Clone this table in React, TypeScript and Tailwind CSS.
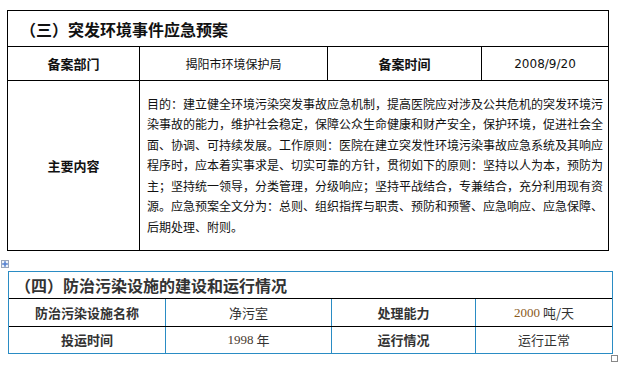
import React from "react";

const cjk = { fontFamily: '"Noto Sans CJK SC", "Noto Sans", sans-serif' };

const lines = [
  "目的：建立健全环境污染突发事故应急机制，提高医院应对涉及公共危机的突发环境污",
  "染事故的能力，维护社会稳定，保障公众生命健康和财产安全，保护环境，促进社会全",
  "面、协调、可持续发展。工作原则：医院在建立突发性环境污染事故应急系统及其响应",
  "程序时，应本着实事求是、切实可靠的方针，贯彻如下的原则：坚持以人为本，预防为",
  "主；坚持统一领导，分类管理，分级响应；坚持平战结合，专兼结合，充分利用现有资",
  "源。应急预案全文分为：总则、组织指挥与职责、预防和预警、应急响应、应急保障、",
  "后期处理、附则。",
];

const MoveHandle = () => (
  <svg width="8" height="8" viewBox="0 0 8 8" className="absolute left-[-8px] top-[-12px]">
    <rect x="0.5" y="0.5" width="7" height="7" fill="#eef3fa" stroke="#9aa6b8" />
    <path d="M4 1.5v5M1.5 4h5" stroke="#2a62c4" strokeWidth="1" />
    <path d="M4 1.2l-1 1h2zM4 6.8l-1-1h2zM1.2 4l1-1v2zM6.8 4l-1-1v2z" fill="#2a62c4" />
  </svg>
);

const App = () => {
  return (
    <div className="w-[620px] h-[384px] bg-white pt-[10px] text-[#111]" style={cjk}>
      {/* 表一：突发环境事件应急预案 */}
      <div className="ml-[7px] w-[602px] border border-black">
        <div className="h-[35px] flex items-center pl-[12px] text-[16px] font-bold">
          （三）突发环境事件应急预案
        </div>
        <div className="h-[34px] border-t border-black grid grid-cols-[131px_188px_154px_127px]">
          <div className="flex items-center justify-center text-[13px] font-bold">备案部门</div>
          <div className="flex items-center justify-center border-l border-black text-[12px]">揭阳市环境保护局</div>
          <div className="flex items-center justify-center border-l border-black text-[13px] font-bold">备案时间</div>
          <div
            className="flex items-center justify-center border-l border-black text-[12px]"
            style={{ fontFamily: '"DejaVu Sans", sans-serif' }}
          >
            2008/9/20
          </div>
        </div>
        <div className="h-[170px] border-t border-black grid grid-cols-[131px_469px]">
          <div className="flex items-center justify-center text-[13px] font-bold">主要内容</div>
          <div className="border-l border-black flex flex-col justify-center pl-[7px] text-[12px] leading-[20.5px]">
            {lines.map((l) => (
              <div key={l} className="whitespace-nowrap">{l}</div>
            ))}
          </div>
        </div>
      </div>

      {/* 表二：防治污染设施 */}
      <div className="relative ml-[8px] mt-[20px] w-[605px] border border-[#2a8cc4] text-[#333]">
        <MoveHandle />
        <div className="h-[26px] flex items-center pl-[6px] text-[16px] font-bold">
          （四）防治污染设施的建设和运行情况
        </div>
        <div className="h-[28px] border-t border-black grid grid-cols-[156px_166px_144px_137px]">
          <div className="flex items-center justify-center text-[13px] font-bold">防治污染设施名称</div>
          <div className="flex items-center justify-center border-l border-[#2a8cc4] text-[13px]">净污室</div>
          <div className="flex items-center justify-center border-l border-[#2a8cc4] text-[13px] font-bold">处理能力</div>
          <div className="flex items-center justify-center border-l border-[#2a8cc4] text-[13px]">
            <span className="text-[#8a5a1c]" style={{ fontFamily: '"Liberation Serif", serif' }}>2000</span>
            <span>&nbsp;吨/天</span>
          </div>
        </div>
        <div className="h-[27px] border-t border-black grid grid-cols-[156px_166px_144px_137px]">
          <div className="flex items-center justify-center text-[13px] font-bold">投运时间</div>
          <div className="flex items-center justify-center border-l border-[#2a8cc4] text-[13px]">
            <span className="text-[#4a3a30]" style={{ fontFamily: '"Liberation Serif", serif' }}>1998</span>
            <span>&nbsp;年</span>
          </div>
          <div className="flex items-center justify-center border-l border-[#2a8cc4] text-[13px] font-bold">运行情况</div>
          <div className="flex items-center justify-center border-l border-[#2a8cc4] text-[13px]">运行正常</div>
        </div>
        <div className="absolute right-[-6px] bottom-[-9px] w-[7px] h-[7px] border border-[#888] bg-white" />
      </div>
    </div>
  );
};

export default App;
